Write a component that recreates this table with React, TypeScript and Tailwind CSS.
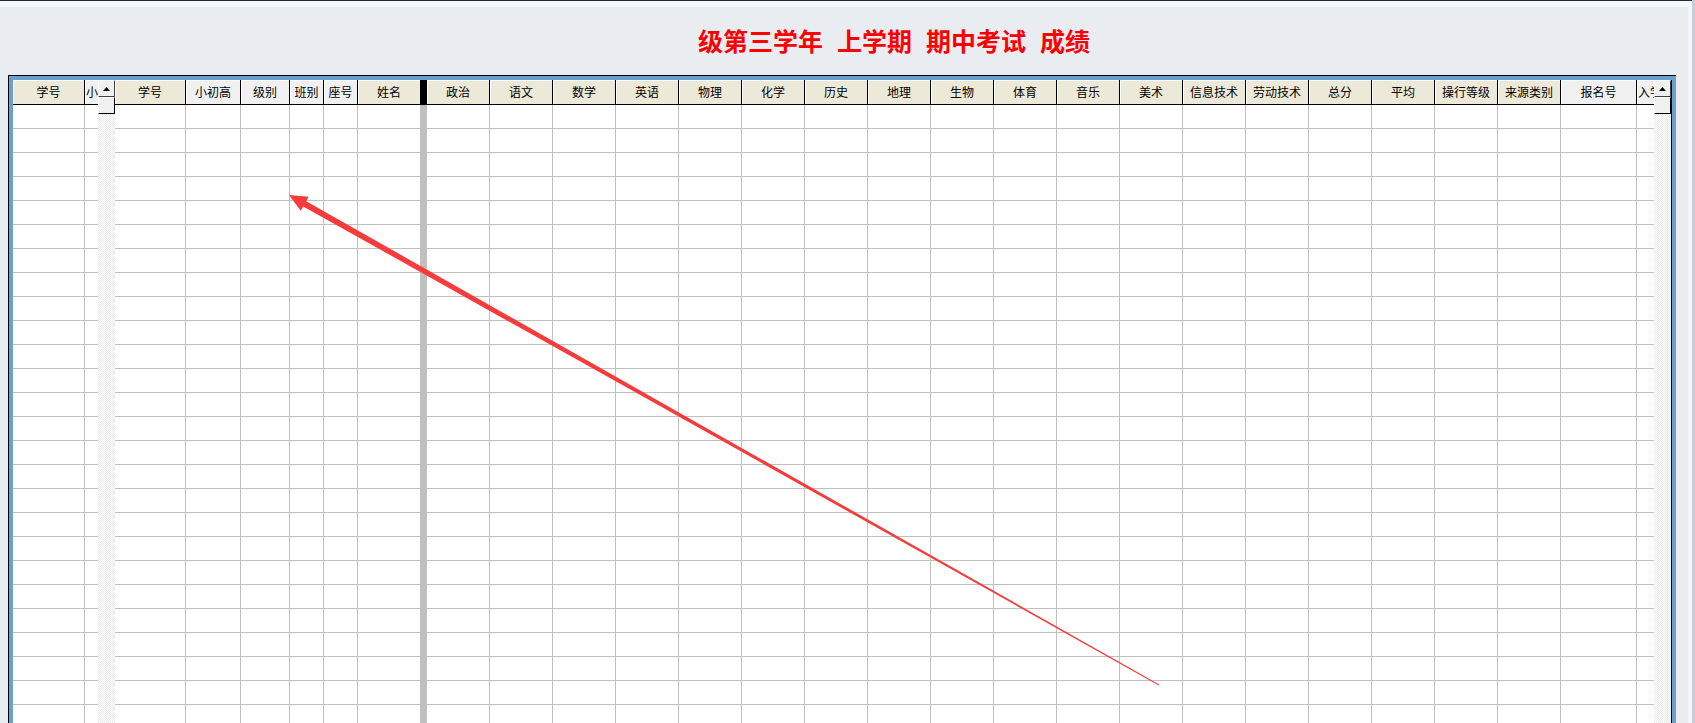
import React from "react";

type Col = {
  label: string;
  w: string;
  bg: string;
  noBorder?: boolean;
  cut?: boolean;
};

const BEIGE = "bg-[#ece9d8]";
const GRAY = "bg-[#f0f0f0]";

const leftCols: Col[] = [
  { label: "学号", w: "w-[72px]", bg: BEIGE },
  { label: "小", w: "w-[13px]", bg: GRAY, noBorder: true, cut: true },
];

const subjects = [
  "政治",
  "语文",
  "数学",
  "英语",
  "物理",
  "化学",
  "历史",
  "地理",
  "生物",
  "体育",
  "音乐",
  "美术",
  "信息技术",
  "劳动技术",
  "总分",
  "平均",
  "操行等级",
  "来源类别",
];

const frozenCols: Col[] = [
  { label: "学号", w: "w-[71px]", bg: BEIGE },
  { label: "小初高", w: "w-[55px]", bg: GRAY },
  { label: "级别", w: "w-[49px]", bg: GRAY },
  { label: "班别", w: "w-[34px]", bg: GRAY },
  { label: "座号", w: "w-[34px]", bg: GRAY },
  { label: "姓名", w: "w-[62px]", bg: BEIGE, noBorder: true },
];

const scrollCols: Col[] = [
  ...subjects.map((s) => ({ label: s, w: "w-[63px]", bg: BEIGE })),
  { label: "报名号", w: "w-[76px]", bg: GRAY },
  { label: "入学", w: "w-[17px]", bg: GRAY, noBorder: true, cut: true },
];

const ROWS = 27;

function HeaderCell({ col }: { col: Col }) {
  return (
    <div
      className={`${col.w} ${col.bg} flex h-[25px] shrink-0 items-center overflow-hidden whitespace-nowrap border-b border-black text-[12px] leading-none text-black shadow-[inset_1px_1px_0_#ffffff] ${
        col.noBorder ? "" : "border-r"
      } ${col.cut ? "justify-start pl-px" : "justify-center"}`}
    >
      {col.label}
    </div>
  );
}

function Column({ col }: { col: Col }) {
  return (
    <div className={`${col.w} flex shrink-0 flex-col`}>
      <HeaderCell col={col} />
      {Array.from({ length: ROWS }).map((_, i) => (
        <div
          key={i}
          className={`h-[24px] shrink-0 border-b border-[#c0c0c0] bg-white ${
            col.noBorder ? "" : "border-r"
          }`}
        />
      ))}
    </div>
  );
}

function UpArrow() {
  return (
    <svg width="7" height="4" viewBox="0 0 7 4">
      <polygon points="3.5,0 7,4 0,4" fill="#000000" />
    </svg>
  );
}

function ScrollBar({ right }: { right?: boolean }) {
  return (
    <div
      className={`flex shrink-0 flex-col ${
        right ? "w-[18px] border-r border-black" : "w-[17px]"
      }`}
    >
      <div className="flex h-[17px] shrink-0 items-center justify-center border border-white border-r-[#404040] border-b-[#404040] bg-[#f0f0f0]">
        <UpArrow />
      </div>
      <div className="h-[17px] shrink-0 border border-white border-r-black border-b-black bg-[#f0f0f0]" />
      <div className="flex-1 bg-[repeating-conic-gradient(#ffffff_0%_25%,#ebebeb_0%_50%)] bg-[length:2px_2px]" />
    </div>
  );
}

function Divider() {
  return (
    <div className="flex w-[7px] shrink-0 flex-col">
      <div className="h-[25px] bg-black" />
      <div className="flex-1 bg-[#c0c0c0]" />
    </div>
  );
}

// red annotation arrow drawn on top of the grid
function Arrow() {
  return (
    <svg
      className="pointer-events-none absolute left-0 top-0"
      width="1695"
      height="723"
      viewBox="0 0 1695 723"
    >
      <polygon
        points="289,195 308.6,196.8 306.2,201.2 1159.2,684.6 1158.8,685.4 303.2,206.4 300.8,210.8"
        fill="#f53b3b"
      />
    </svg>
  );
}

export default function App() {
  return (
    <div className="relative flex h-[723px] w-[1695px] overflow-hidden bg-[#e9edf2] font-['Noto_Sans_CJK_SC','Noto_Sans',sans-serif]">
      <div className="flex w-[1692px] flex-col border-t border-[#1c2a38]">
        <div className="flex flex-1 flex-col overflow-hidden border-t-[6px] border-r-[4px] border-[#f3f6fa]">
          <div className="mt-[21px] flex justify-center gap-[14px] pl-[100px] text-[25px] font-bold leading-[25px] text-[#ff0000]">
            <span>级第三学年</span>
            <span>上学期</span>
            <span>期中考试</span>
            <span>成绩</span>
          </div>

          <div className="ml-[8px] mt-[22px] w-[1668px] flex-1 border-l border-t border-black">
            <div className="flex h-full border-l-4 border-r-4 border-t-4 border-[#6aa0cc]">
              {leftCols.map((c, i) => (
                <Column key={"l" + i} col={c} />
              ))}
              <ScrollBar />
              {frozenCols.map((c, i) => (
                <Column key={"f" + i} col={c} />
              ))}
              <Divider />
              {scrollCols.map((c, i) => (
                <Column key={"s" + i} col={c} />
              ))}
              <ScrollBar right />
            </div>
          </div>
        </div>
      </div>
      <div className="w-[3px] bg-[#c9ced6]" />
      <Arrow />
    </div>
  );
}
